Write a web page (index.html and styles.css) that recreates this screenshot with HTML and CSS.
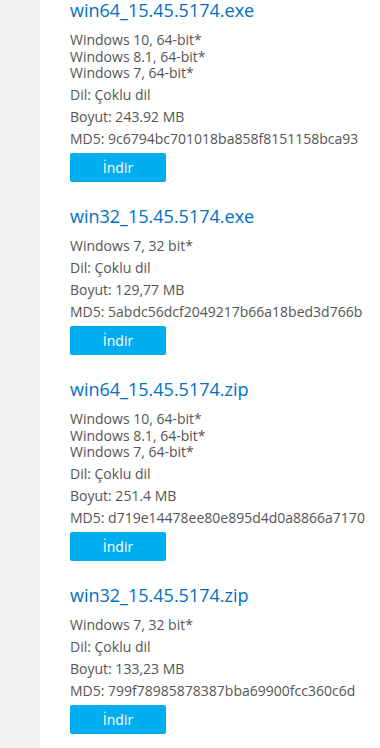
FILE: index.html
```html
<!DOCTYPE html>
<html lang="tr">
<head>
    <meta charset="UTF-8">
    <meta name="viewport" content="width=device-width, initial-scale=1.0">
    <title>İndirmeler</title>
    <link rel="stylesheet" href="styles.css">
</head>
<body>
    <div class="page">
        <div class="side"></div>
        <div class="downloads">
            <div class="file">
                <a class="file-name" href="#">win64_15.45.5174.exe</a>
                <p class="row os">Windows 10, 64-bit*<br>Windows 8.1, 64-bit*<br>Windows 7, 64-bit*</p>
                <p class="row">Dil: Çoklu dil</p>
                <p class="row">Boyut: 243.92 MB</p>
                <p class="row">MD5: 9c6794bc701018ba858f8151158bca93</p>
                <button class="dl-btn">İndir</button>
            </div>
            <div class="file">
                <a class="file-name" href="#">win32_15.45.5174.exe</a>
                <p class="row">Windows 7, 32 bit*</p>
                <p class="row">Dil: Çoklu dil</p>
                <p class="row">Boyut: 129,77 MB</p>
                <p class="row">MD5: 5abdc56dcf2049217b66a18bed3d766b</p>
                <button class="dl-btn">İndir</button>
            </div>
            <div class="file">
                <a class="file-name" href="#">win64_15.45.5174.zip</a>
                <p class="row os">Windows 10, 64-bit*<br>Windows 8.1, 64-bit*<br>Windows 7, 64-bit*</p>
                <p class="row">Dil: Çoklu dil</p>
                <p class="row">Boyut: 251.4 MB</p>
                <p class="row">MD5: d719e14478ee80e895d4d0a8866a7170</p>
                <button class="dl-btn">İndir</button>
            </div>
            <div class="file">
                <a class="file-name" href="#">win32_15.45.5174.zip</a>
                <p class="row">Windows 7, 32 bit*</p>
                <p class="row">Dil: Çoklu dil</p>
                <p class="row">Boyut: 133,23 MB</p>
                <p class="row">MD5: 799f78985878387bba69900fcc360c6d</p>
                <button class="dl-btn">İndir</button>
            </div>
        </div>
    </div>
</body>
</html>
```

FILE: styles.css
```css
body, html {
    margin: 0;
    padding: 0;
    height: 100%;
    background-color: #fff;
    font-family: 'Open Sans', 'Noto Sans', sans-serif;
}
.page {
    display: flex;
    min-height: 100%;
}
.side {
    width: 40px;
    flex-shrink: 0;
    background-color: #f1f1f1;
}
.downloads {
    flex: 1;
    padding-left: 30px;
}
.file {
    display: flex;
    flex-direction: column;
    align-items: flex-start;
    margin-bottom: 24px;
}
.file-name {
    font-size: 18px;
    line-height: 20px;
    color: #0071c5;
    text-decoration: none;
    margin-bottom: 12px;
}
.row {
    margin: 0 0 5.5px;
    font-size: 14px;
    line-height: 16.5px;
    color: #555;
}
.dl-btn {
    width: 96px;
    height: 29px;
    padding: 0;
    border: none;
    border-radius: 2px;
    background-color: #00aeef;
    color: #fff;
    font-family: inherit;
    font-size: 14px;
    cursor: pointer;
}
```
